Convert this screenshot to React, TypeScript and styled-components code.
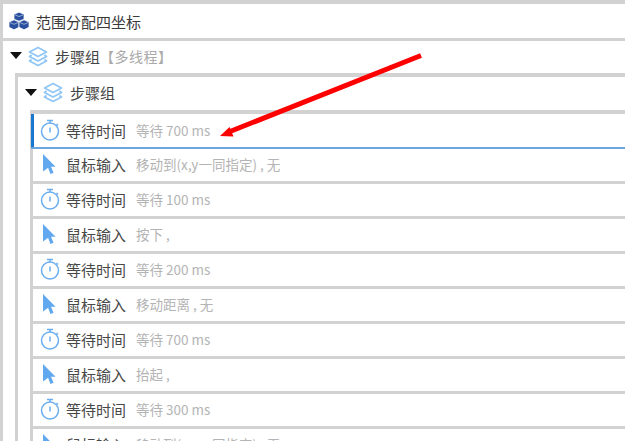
import React from "react";
import styled, { createGlobalStyle } from "styled-components";

const GlobalStyle = createGlobalStyle`
  html, body {
    margin: 0;
    padding: 0;
    background: #fff;
  }
  body {
    font-family: "Noto Sans CJK SC", "Noto Sans", sans-serif;
  }
`;

const Page = styled.div`
  position: relative;
  width: 625px;
  height: 441px;
  overflow: hidden;
  background: #fff;
  box-sizing: border-box;
  border-top: 4px solid #d2d2d2;
  border-left: 3px solid #d2d2d2;
`;

const Header = styled.div`
  display: flex;
  align-items: center;
  gap: 7px;
  height: 34px;
  padding-left: 6px;
  border-bottom: 3px solid #d2d2d2;
  font-size: 15px;
  color: #3a3a3a;
`;

const Group = styled.div`
  margin-left: 12px;
  border-top: 4px solid #d2d2d2;
  border-left: 3px solid #d2d2d2;
`;

const Outer = styled.div`
  display: flex;
  flex-direction: column;
`;

const GroupHead = styled.div<{ $inner?: boolean }>`
  display: flex;
  align-items: center;
  box-sizing: border-box;
  height: ${(p) => (p.$inner ? "33px" : "32px")};
  padding: 0 0 2px 7px;
  font-size: 15px;
  color: #444;
`;

const Caret = styled.span`
  width: 0;
  height: 0;
  border-left: 6px solid transparent;
  border-right: 6px solid transparent;
  border-top: 7px solid #111;
  margin-right: 6px;
  margin-bottom: 1px;
`;

const Note = styled.span`
  color: #aaa;
  font-size: 14px;
  letter-spacing: 0.5px;
`;

const GroupTitle = styled.span`
  margin-left: 7px;
`;

const Steps = styled.div`
  margin-left: 12px;
  border-top: 4px solid #d2d2d2;
  border-left: 3px solid #d2d2d2;
`;

const Step = styled.div<{ $active?: boolean }>`
  display: flex;
  align-items: center;
  box-sizing: border-box;
  height: 35px;
  padding-bottom: ${(p) => (p.$active ? "1px" : "2px")};
  border-bottom: ${(p) => (p.$active ? "2px solid #6ba7de" : "3px solid #d2d2d2")};
  box-shadow: ${(p) => (p.$active ? "inset 3px 0 0 #1a78d0" : "none")};
  margin-left: ${(p) => (p.$active ? "-2px" : "0")};
  padding-left: ${(p) => (p.$active ? "9px" : "7px")};
`;

const IconSlot = styled.span`
  display: flex;
  justify-content: center;
  width: 20px;
  margin-right: 6px;
`;

const StepName = styled.span`
  font-size: 15px;
  color: #484848;
  width: 70px;
  white-space: nowrap;
`;

const StepDetail = styled.span`
  font-size: 13.5px;
  color: #b4b4b4;
  white-space: nowrap;
`;

const Arrow = styled.svg`
  position: absolute;
  left: -3px;
  top: -4px;
  pointer-events: none;
`;

const Timer = () => (
  <svg width="20" height="22" viewBox="0 0 20 22" fill="none" stroke="#6aaeef" strokeWidth="1.5">
    <circle cx="10" cy="12.500" r="8.500" />
    <path d="M7 1.500h6M10 1.500v2.500M10 8.500v5" />
    <path d="M16.500 5l1.500 1.500" />
  </svg>
);

const Cursor = () => (
  <svg width="16" height="22" viewBox="0 0 16 22">
    <path d="M1 1l12.500 12.800H9l2.600 6-3.200 1.200-2.300-6.200L1 18.500z" fill="#62a8ee" />
  </svg>
);

const Layers = () => (
  <svg width="20" height="21" viewBox="0 0 20 21" fill="none" stroke="#8fc6f5" strokeWidth="1.700" strokeLinejoin="round">
    <path d="M10 1.500l8.500 4.500-8.500 4.500L1.500 6z" />
    <path d="M3.500 9L1.500 10.500 10 15l8.500-4.500L16.500 9" />
    <path d="M3.500 13.500l-2 1.500L10 19.500l8.500-4.500-2-1.500" />
  </svg>
);

const Cubes = () => (
  <svg width="20" height="18" viewBox="0 0 22 19.500">
    <g fill="#2a4f9e" stroke="#fff" strokeWidth="0.8" strokeLinejoin="round">
      <path d="M11 0l5.500 2.300v5.400L11 10 5.500 7.700V2.300z" />
      <path d="M5.500 8.500L11 10.900v5.700l-5.500 2.800L0 16.600v-5.700z" />
      <path d="M16.500 8.500l5.500 2.400v5.700l-5.500 2.800-5.500-2.800v-5.700z" />
    </g>
    <g stroke="#b9c9e8" strokeWidth="0.8" fill="none">
      <path d="M6.500 2.900L11 4.900l4.500-2" />
      <path d="M1 11.400l4.500 2 4.500-2" />
      <path d="M12 11.400l4.500 2 4.500-2" />
    </g>
  </svg>
);

const steps = [
  { kind: "timer", name: "等待时间", detail: "等待 700 ms" },
  { kind: "mouse", name: "鼠标输入", detail: "移动到(x,y一同指定) , 无" },
  { kind: "timer", name: "等待时间", detail: "等待 100 ms" },
  { kind: "mouse", name: "鼠标输入", detail: "按下 ," },
  { kind: "timer", name: "等待时间", detail: "等待 200 ms" },
  { kind: "mouse", name: "鼠标输入", detail: "移动距离 , 无" },
  { kind: "timer", name: "等待时间", detail: "等待 700 ms" },
  { kind: "mouse", name: "鼠标输入", detail: "抬起 ," },
  { kind: "timer", name: "等待时间", detail: "等待 300 ms" },
  { kind: "mouse", name: "鼠标输入", detail: "移动到(x,y一同指定) , 无" },
];

export default function App() {
  return (
    <>
      <GlobalStyle />
      <Page>
        <Header>
          <Cubes />
          范围分配四坐标
        </Header>
        <Outer>
          <GroupHead>
            <Caret />
            <Layers />
            <GroupTitle>步骤组</GroupTitle>
            <Note>【多线程】</Note>
          </GroupHead>
          <Group>
            <GroupHead $inner>
              <Caret />
              <Layers />
              <GroupTitle>步骤组</GroupTitle>
            </GroupHead>
            <Steps>
              {steps.map((s, i) => (
                <Step key={i} $active={i === 0}>
                  <IconSlot>{s.kind === "timer" ? <Timer /> : <Cursor />}</IconSlot>
                  <StepName>{s.name}</StepName>
                  <StepDetail>{s.detail}</StepDetail>
                </Step>
              ))}
            </Steps>
          </Group>
        </Outer>
        <Arrow width="625" height="441" viewBox="0 0 625 441">
          <path d="M421 55.500L230 131.500" stroke="#ff0000" strokeWidth="5" fill="none" />
          <path d="M220 136l9.500-9 4 9.500z" fill="#ff0000" />
        </Arrow>
      </Page>
    </>
  );
}
